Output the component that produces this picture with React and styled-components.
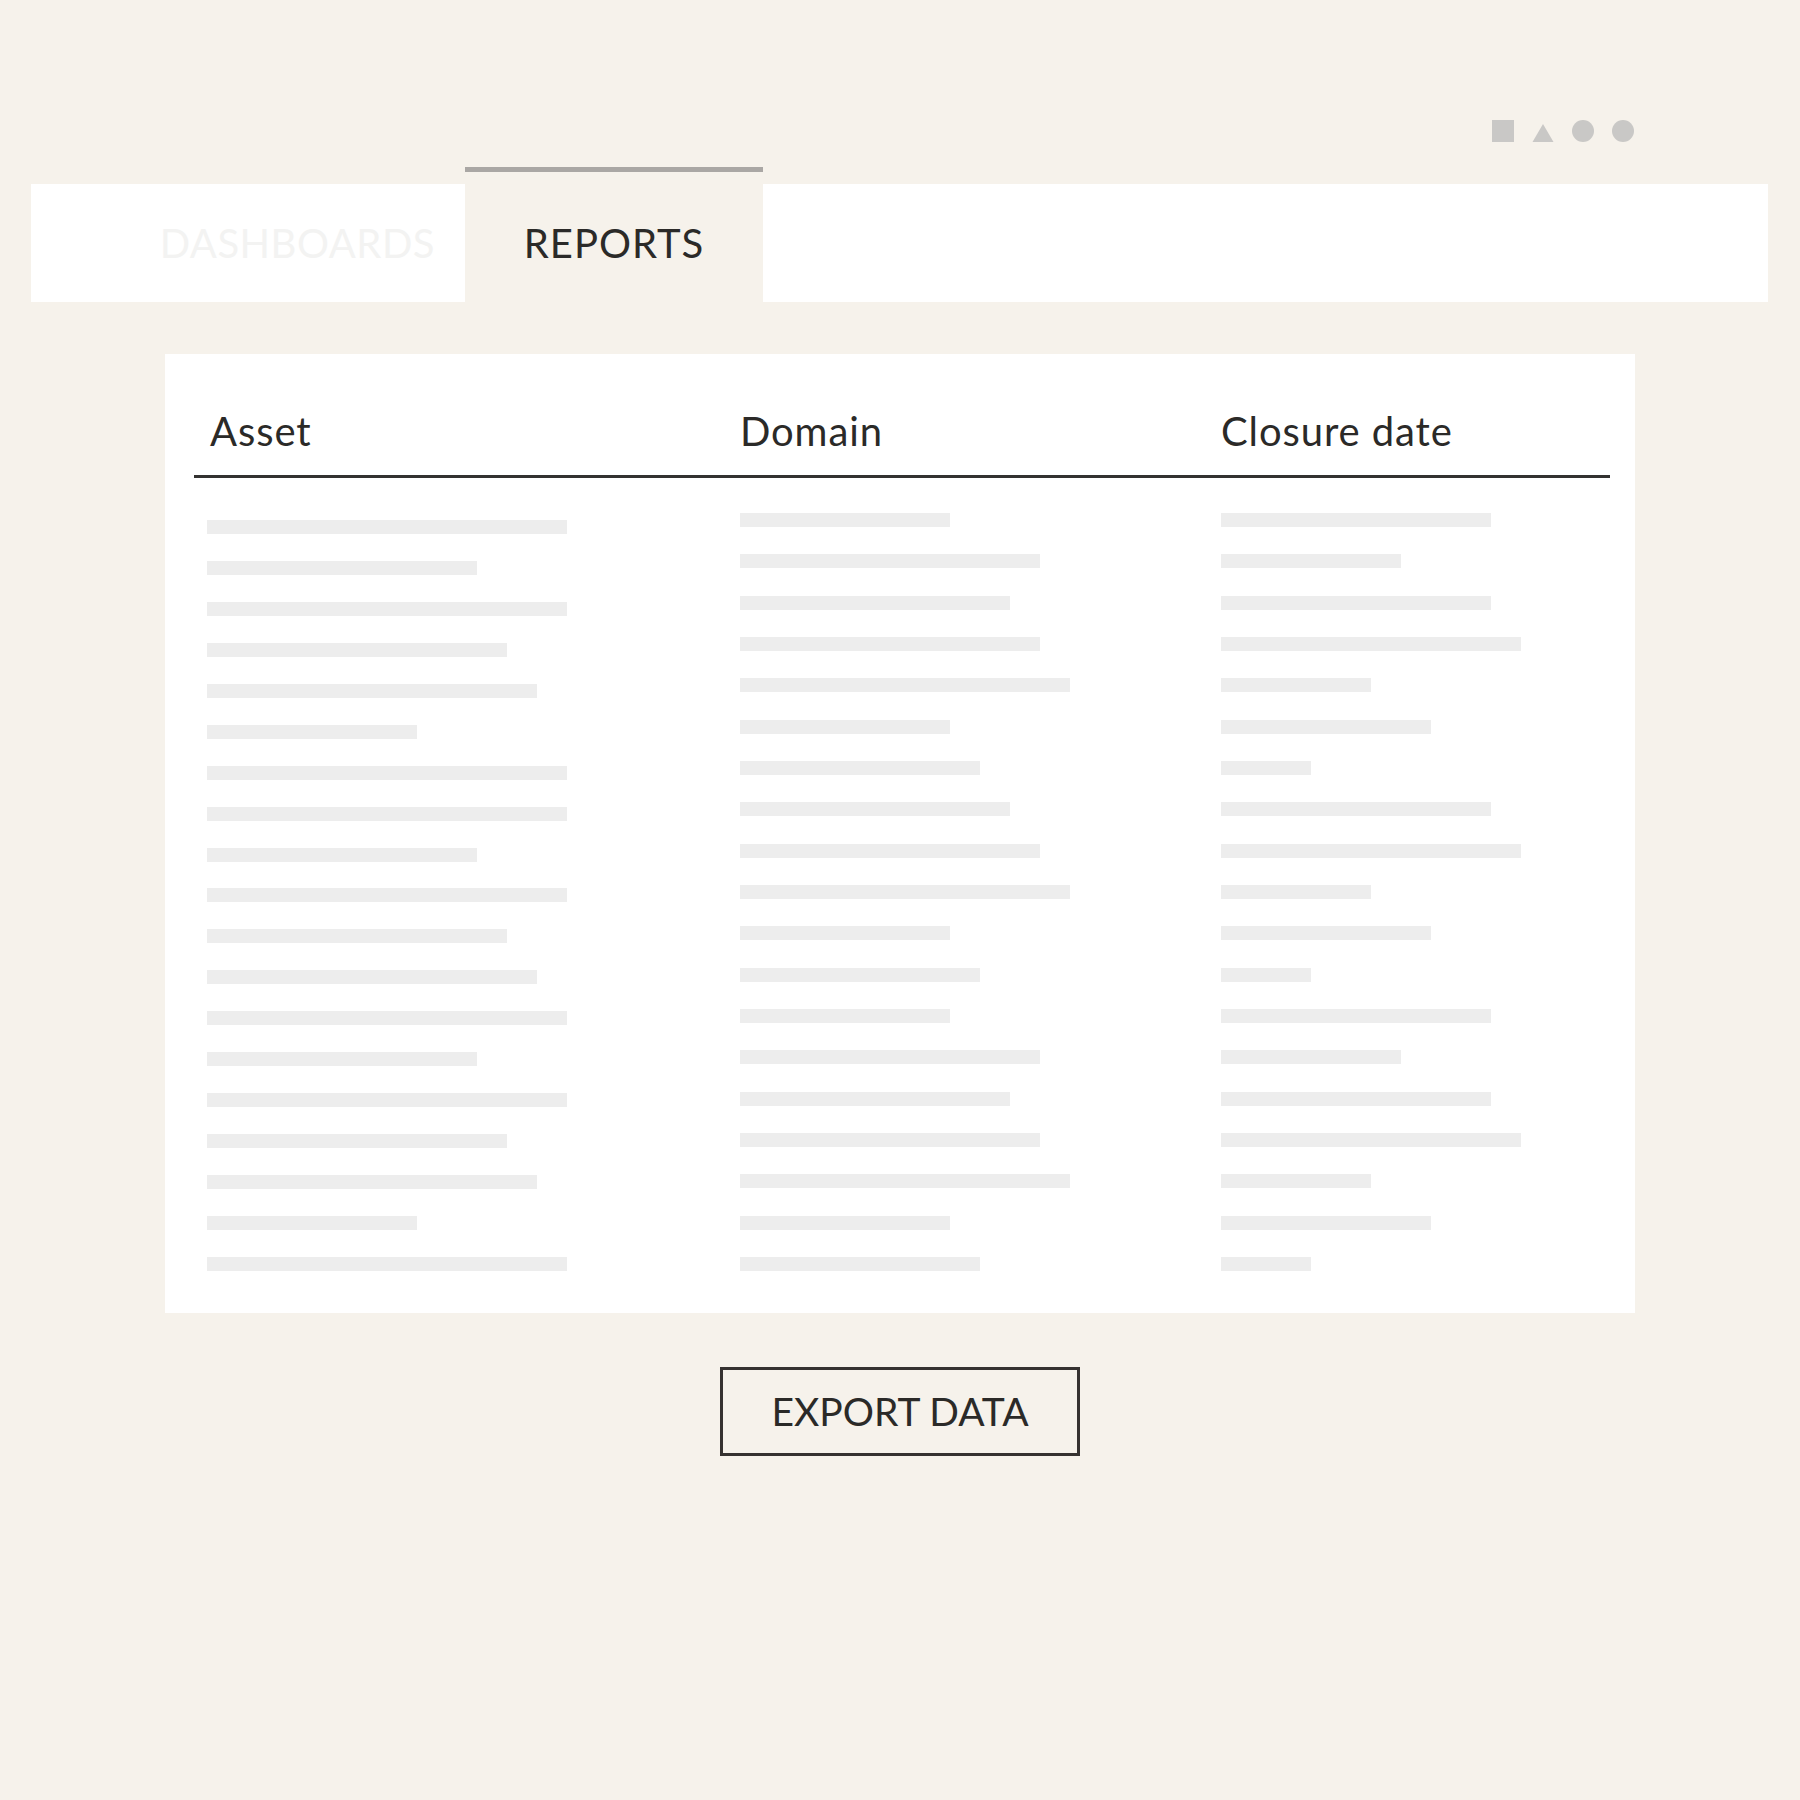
import React from 'react';
import styled, { createGlobalStyle } from 'styled-components';

const GlobalStyle = createGlobalStyle`
  html, body {
    margin: 0;
    padding: 0;
    background: #f6f2eb;
  }

  body {
    font-family: 'Lato', 'Open Sans', sans-serif;
    color: #2b2a28;
  }
`;

const assetWidths = [360, 270, 360, 300, 330, 210, 360, 360, 270, 360, 300, 330, 360, 270, 360, 300, 330, 210, 360];
const domainWidths = [210, 300, 270, 300, 330, 210, 240, 270, 300, 330, 210, 240, 210, 300, 270, 300, 330, 210, 240];
const closureWidths = [270, 180, 270, 300, 150, 210, 90, 270, 300, 150, 210, 90, 270, 180, 270, 300, 150, 210, 90];

const ShapeIcons = () => (
  <Shapes>
    <svg width="22" height="22" viewBox="0 0 22 22">
      <rect x="0" y="0" width="22" height="22" fill="#c9c8c6" />
    </svg>
    <svg width="22" height="22" viewBox="0 0 22 22">
      <polygon points="11,4 21.5,22 0.5,22" fill="#c9c8c6" />
    </svg>
    <svg width="22" height="22" viewBox="0 0 22 22">
      <circle cx="11" cy="11" r="11" fill="#c9c8c6" />
    </svg>
    <svg width="22" height="22" viewBox="0 0 22 22">
      <circle cx="11" cy="11" r="11" fill="#c9c8c6" />
    </svg>
  </Shapes>
);

const App = () => {
  return (
    <Page>
      <GlobalStyle />
      <TopBar>
        <ShapeIcons />
      </TopBar>

      <TabBar>
        <Tab>
          <TabLabel faded>DASHBOARDS</TabLabel>
        </Tab>
        <ActiveTab>
          <Indicator />
          <ActiveTabBody>
            <TabLabel>REPORTS</TabLabel>
          </ActiveTabBody>
        </ActiveTab>
        <TabFiller />
      </TabBar>

      <Card>
        <HeaderRow>
          <HeaderCell>Asset</HeaderCell>
          <HeaderCell>Domain</HeaderCell>
          <HeaderCell>Closure date</HeaderCell>
        </HeaderRow>
        <Body>
          <Column offset={7} gap={26.94}>
            {assetWidths.map((w, i) => (
              <Bar key={i} style={{ width: w }} />
            ))}
          </Column>
          <Column gap={27.33}>
            {domainWidths.map((w, i) => (
              <Bar key={i} style={{ width: w }} />
            ))}
          </Column>
          <Column gap={27.33}>
            {closureWidths.map((w, i) => (
              <Bar key={i} style={{ width: w }} />
            ))}
          </Column>
        </Body>
      </Card>

      <Actions>
        <ExportButton>EXPORT DATA</ExportButton>
      </Actions>
    </Page>
  );
};

const Page = styled.div`
  width: 1800px;
  min-height: 1800px;
  padding-top: 120px;
  box-sizing: border-box;
`;

const TopBar = styled.div`
  display: flex;
  justify-content: flex-end;
  padding: 0 166px 0 164px;
`;

const Shapes = styled.div`
  display: flex;
  gap: 18px;

  svg {
    display: block;
  }
`;

const TabBar = styled.div`
  display: flex;
  align-items: flex-end;
  margin: 25px 32px 0 31px;
`;

const Tab = styled.div`
  width: 434px;
  height: 118px;
  background: #ffffff;
  display: flex;
  align-items: center;
  justify-content: flex-end;
  padding-right: 30px;
  box-sizing: border-box;
`;

const ActiveTab = styled.div`
  width: 298px;
  display: flex;
  flex-direction: column;
  gap: 12px;
`;

const Indicator = styled.div`
  height: 5px;
  background: #aaa7a4;
`;

const ActiveTabBody = styled.div`
  height: 118px;
  display: flex;
  align-items: center;
  justify-content: center;
`;

const TabFiller = styled.div`
  flex: 1;
  height: 118px;
  background: #ffffff;
`;

const TabLabel = styled.span`
  font-size: 40px;
  line-height: 48px;
  letter-spacing: ${(props) => (props.faded ? '0.5px' : '1px')};
  color: ${(props) => (props.faded ? '#f3f3f2' : '#2b2a28')};
`;

const Card = styled.div`
  width: 1470px;
  margin: 52px auto 0;
  background: #ffffff;
  padding: 53px 25px 42px 29px;
  box-sizing: border-box;
`;

const HeaderRow = styled.div`
  display: grid;
  grid-template-columns: 530px 481px 1fr;
  padding: 0 0 20px 16px;
  border-bottom: 3px solid #333231;
`;

const HeaderCell = styled.div`
  font-size: 40px;
  line-height: 48px;
  letter-spacing: 0.9px;
  color: #2b2a28;
`;

const Body = styled.div`
  display: grid;
  grid-template-columns: 533px 481px 1fr;
  padding: 35px 0 0 13px;
`;

const Column = styled.div`
  display: flex;
  flex-direction: column;
  gap: ${(props) => props.gap}px;
  padding-top: ${(props) => props.offset || 0}px;
`;

const Bar = styled.div`
  height: 14px;
  background: #ededed;
`;

const Actions = styled.div`
  display: flex;
  justify-content: center;
  margin-top: 54px;
`;

const ExportButton = styled.button`
  width: 360px;
  height: 89px;
  background: transparent;
  border: 3px solid #363230;
  font-family: 'Lato', 'Open Sans', sans-serif;
  font-size: 39px;
  color: #2b2a28;
  padding: 0;
  cursor: pointer;
`;

export default App;
